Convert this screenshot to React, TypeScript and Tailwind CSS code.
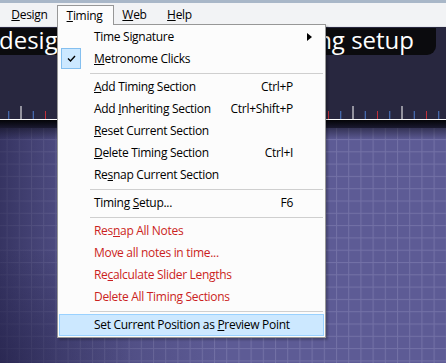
import React from "react";

type Item =
  | { sep: true }
  | {
      sep?: false;
      pre: string;
      u?: string;
      post?: string;
      shortcut?: string;
      arrow?: boolean;
      red?: boolean;
      checked?: boolean;
      hot?: boolean;
    };

const items: Item[] = [
  { pre: "Time Signature", arrow: true },
  { pre: "", u: "M", post: "etronome Clicks", checked: true },
  { sep: true },
  { pre: "", u: "A", post: "dd Timing Section", shortcut: "Ctrl+P" },
  { pre: "Add ", u: "I", post: "nheriting Section", shortcut: "Ctrl+Shift+P" },
  { pre: "", u: "R", post: "eset Current Section" },
  { pre: "", u: "D", post: "elete Timing Section", shortcut: "Ctrl+I" },
  { pre: "Re", u: "s", post: "nap Current Section" },
  { sep: true },
  { pre: "Timing ", u: "S", post: "etup...", shortcut: "F6" },
  { sep: true },
  { pre: "Res", u: "n", post: "ap All Notes", red: true },
  { pre: "Move all notes in time...", red: true },
  { pre: "Re", u: "c", post: "alculate Slider Lengths", red: true },
  { pre: "Delete All Timing Sections", red: true },
  { sep: true },
  { pre: "Set Current Position as ", u: "P", post: "review Point", hot: true },
];

const font = { fontFamily: '"Open Sans", "Noto Sans", sans-serif' };

const tickColors = ["#ffffff", "#4f7fd0", "#c0303a", "#4f7fd0"];

function Ticks() {
  const ticks: React.ReactNode[] = [];
  // left section: white at 21, period 4 ticks
  for (let k = -1; k < 25; k++) {
    const x = 21 + k * 12.25;
    if (x > 322) break;
    const c = tickColors[((k % 4) + 4) % 4];
    ticks.push(
      <line key={"a" + k} x1={x} x2={x} y1={c === "#ffffff" ? 0 : 5} y2={13} stroke={c} strokeWidth={1} />
    );
  }
  // right section: white at 353
  for (let k = -2; k < 8; k++) {
    const x = 353 + k * 12.25;
    const c = tickColors[((k % 4) + 4) % 4];
    ticks.push(
      <line key={"b" + k} x1={x} x2={x} y1={c === "#ffffff" ? 0 : 5} y2={13} stroke={c} strokeWidth={1} />
    );
  }
  return (
    <svg width="446" height="13" className="block">
      {ticks}
    </svg>
  );
}

function Grid() {
  return (
    <svg width="446" height="235" className="absolute left-0 top-0">
      <defs>
        <pattern id="g" x="6.6" y="11" width="12.2" height="12.3" patternUnits="userSpaceOnUse">
          <line x1="0.5" y1="0" x2="0.5" y2="12.3" stroke="#7371a6" strokeWidth="1" />
          <line x1="0" y1="0.5" x2="12.2" y2="0.5" stroke="#7371a6" strokeWidth="1" />
        </pattern>
        <linearGradient id="lv" x1="0" y1="0" x2="1" y2="0">
          <stop offset="0" stopColor="#1c1a40" stopOpacity="0.6" />
          <stop offset="0.13" stopColor="#1c1a40" stopOpacity="0.25" />
          <stop offset="0.3" stopColor="#1c1a40" stopOpacity="0" />
        </linearGradient>
        <linearGradient id="tv" x1="0" y1="0" x2="0" y2="1">
          <stop offset="0" stopColor="#0a0a14" stopOpacity="0.5" />
          <stop offset="0.05" stopColor="#0a0a14" stopOpacity="0" />
        </linearGradient>
        <radialGradient id="bv" cx="0" cy="1" r="0.5">
          <stop offset="0" stopColor="#1c1a40" stopOpacity="0.45" />
          <stop offset="1" stopColor="#1c1a40" stopOpacity="0" />
        </radialGradient>
      </defs>
      <rect width="446" height="235" fill="#5d5b95" />
      <rect width="446" height="235" fill="url(#g)" />
      <rect width="446" height="235" fill="url(#lv)" />
      <rect width="446" height="235" fill="url(#tv)" />
      <rect width="446" height="235" fill="url(#bv)" />
    </svg>
  );
}

function Check() {
  return (
    <svg width="9" height="7" viewBox="0 0 9 7">
      <path d="M1 3.5 L3.5 6 L8 1" stroke="#000" strokeWidth="1.4" fill="none" />
    </svg>
  );
}

export default function App() {
  return (
    <div className="relative w-[446px] h-[363px] overflow-hidden bg-[#28273f]" style={font}>
      {/* window top edge */}
      <div className="h-[3px] bg-[#a9b7c8]" />
      {/* menu bar */}
      <div className="h-[24px] bg-[#f2f3f5] flex items-center text-[12px] tracking-[-0.3px] text-black border-b border-[#e4e6ea]">
        <div className="ml-[2px] w-[55px] text-center">
          <span className="underline">D</span>esign
        </div>
        <div className="w-[57px] text-center">
          <span className="underline">T</span>iming
        </div>
        <div className="w-[41px] text-center">
          <span className="underline">W</span>eb
        </div>
        <div className="w-[49px] text-center">
          <span className="underline">H</span>elp
        </div>
      </div>
      {/* canvas */}
      <div className="flex flex-col h-[336px]">
        <div className="h-[92px] bg-[#28273f] flex flex-col">
          <div className="mt-[1px] h-[27px] w-[436px] bg-[#0b0b0e] rounded-br-[9px] flex items-center justify-between pr-[22px] text-white text-[24px] leading-none">
            <span className="-mt-[4px] -ml-[1px]">design</span>
            <span className="-mt-[4px]">timing setup</span>
          </div>
          <div className="flex-1" />
          <Ticks />
        </div>
        <div className="h-[1px] bg-white" />
        <div className="h-[8px] bg-gradient-to-b from-[#050508] to-[#1a1930]" />
        <div className="relative flex-1">
          <Grid />
        </div>
      </div>

      {/* dropdown menu */}
      <div className="absolute left-[57px] top-[24px] w-[269px] bg-[#fcfcfc] border border-[#979797] py-[1px] text-[12px] tracking-[-0.3px] shadow-[2px_2px_2px_rgba(0,0,0,0.25)]">
        {items.map((it, i) =>
          it.sep ? (
            <div key={i} className="h-[6px] flex items-center pl-[32px] pr-[2px]">
              <div className="h-[1px] w-full bg-[#cfcfcf]" />
            </div>
          ) : (
            <div
              key={i}
              className={
                "relative h-[22px] flex items-center mx-[1px] " +
                (it.hot ? "bg-[#cce8ff] border border-[#99d1ff] pl-[34px] pr-[30px]" : "pl-[35px] pr-[31px]")
              }
            >
              {it.checked && (
                <div className="absolute left-[2px] top-[0px] w-[20px] h-[21px] bg-[#cce8ff] border border-[#84bfef] flex items-center justify-center">
                  <Check />
                </div>
              )}
              <span className={"flex-1 whitespace-nowrap " + (it.red ? "text-[#cb1f22]" : "text-black")}>
                {it.pre}
                {it.u && <span className="underline">{it.u}</span>}
                {it.post}
              </span>
              {it.shortcut && <span className="text-black whitespace-nowrap">{it.shortcut}</span>}
              {it.arrow && (
                <svg width="5" height="8" viewBox="0 0 5 8" className="absolute right-[12px] top-[7px]">
                  <path d="M0 0 L5 4 L0 8 Z" fill="#000" />
                </svg>
              )}
            </div>
          )
        )}
      </div>
      {/* open Timing button */}
      <div className="absolute left-[57px] top-[5px] w-[57px] h-[20px] bg-[#fcfcfc] border-t border-l border-r border-[#979797] flex items-center justify-center text-[12px] tracking-[-0.3px] text-black">
        <span className="-ml-[2px]">
          <span className="underline">T</span>iming
        </span>
      </div>
    </div>
  );
}
